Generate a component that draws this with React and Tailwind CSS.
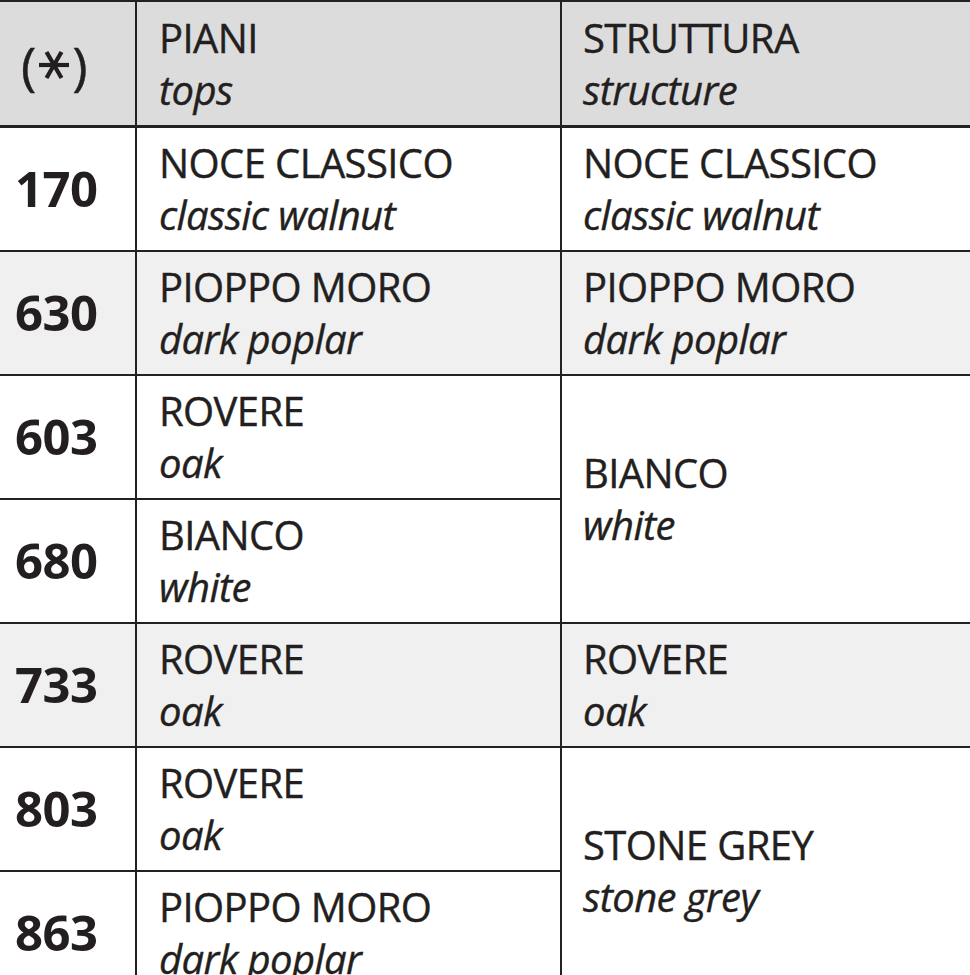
import React from 'react';

// ======================= DATA =======================
const rows = [
  { code: '170', top: ['NOCE CLASSICO', 'classic walnut'], structure: ['NOCE CLASSICO', 'classic walnut'], span: 1, shaded: false },
  { code: '630', top: ['PIOPPO MORO', 'dark poplar'], structure: ['PIOPPO MORO', 'dark poplar'], span: 1, shaded: true },
  { code: '603', top: ['ROVERE', 'oak'], structure: ['BIANCO', 'white'], span: 2, shaded: false },
  { code: '680', top: ['BIANCO', 'white'], structure: null, shaded: false },
  { code: '733', top: ['ROVERE', 'oak'], structure: ['ROVERE', 'oak'], span: 1, shaded: true },
  { code: '803', top: ['ROVERE', 'oak'], structure: ['STONE GREY', 'stone grey'], span: 2, shaded: false },
  { code: '863', top: ['PIOPPO MORO', 'dark poplar'], structure: null, shaded: false },
];

const font = { fontFamily: '"Open Sans", "Liberation Sans", sans-serif' };

// Two-line label: Italian name in caps, English in italics
const Label = ({ it, en }) => (
  <div className="flex flex-col leading-[52px] text-[40px] tracking-[-0.6px] [-webkit-text-stroke:0.4px_#231f20]">
    <span>{it}</span>
    <span className="italic">{en}</span>
  </div>
);

// six-armed asterisk used as the header mark
const Asterisk = () => (
  <svg width="34" height="32" viewBox="0 0 34 32" className="mx-[1px]">
    <g stroke="#231f20" strokeWidth="4.2">
      <line x1="2" y1="16" x2="32" y2="16" />
      <line x1="9.5" y1="3" x2="24.5" y2="29" />
      <line x1="24.5" y1="3" x2="9.5" y2="29" />
    </g>
  </svg>
);

// ======================= COMPONENT =======================
export default function App() {
  return (
    <div className="w-[970px] h-[975px] overflow-hidden bg-white text-[#231f20]" style={font}>
      <div className="grid grid-cols-[137px_425px_1fr] grid-rows-[126px_repeat(7,124px)] border-t-2 border-[#222]">
        {/* header */}
        <div className="bg-[#dcdcdc] border-r-2 border-b-[3px] border-[#222] flex items-center pl-[21px] text-[52px] pt-[2px] [-webkit-text-stroke:0.4px_#231f20]">
          <span>(</span>
          <Asterisk />
          <span>)</span>
        </div>
        <div className="bg-[#dcdcdc] border-r-2 border-b-[3px] border-[#222] flex items-center pl-[22px]">
          <Label it="PIANI" en="tops" />
        </div>
        <div className="bg-[#dcdcdc] border-b-[3px] border-[#222] flex items-center pl-[21px]">
          <Label it="STRUTTURA" en="structure" />
        </div>

        {/* body */}
        {rows.map((r) => (
          <React.Fragment key={r.code}>
            <div className={`border-r-2 border-b-2 border-[#222] flex items-center pl-[15px] font-bold text-[49px] tracking-[-0.5px] ${r.shaded ? 'bg-[#f0f0f0]' : 'bg-white'}`}>
              {r.code}
            </div>
            <div className={`border-r-2 border-b-2 border-[#222] flex items-center pl-[22px] ${r.shaded ? 'bg-[#f0f0f0]' : 'bg-white'}`}>
              <Label it={r.top[0]} en={r.top[1]} />
            </div>
            {r.structure && (
              <div className={`border-b-2 border-[#222] flex items-center pl-[21px] ${r.span === 2 ? 'row-span-2' : ''} ${r.shaded ? 'bg-[#f0f0f0]' : 'bg-white'}`}>
                <Label it={r.structure[0]} en={r.structure[1]} />
              </div>
            )}
          </React.Fragment>
        ))}
      </div>
    </div>
  );
}
